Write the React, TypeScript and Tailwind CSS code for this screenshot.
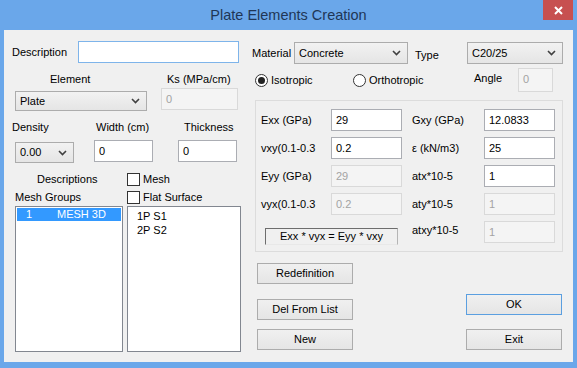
import React from 'react';

const FONT = { fontFamily: '"Liberation Sans", Arial, sans-serif' };

function TextBox({ w, h = 22, value, disabled, focused }: { w: number; h?: number; value?: string; disabled?: boolean; focused?: boolean }) {
  const border = focused ? 'border-[#7eb4ea]' : disabled ? 'border-[#d9d9d9]' : 'border-[#abadb3]';
  return (
    <div
      className={`border ${border} ${disabled ? 'bg-[#f4f4f4] text-[#a3a3a3]' : 'bg-white text-black'} pl-[4px] pt-[3px] text-[11px] leading-[14px] shrink-0`}
      style={{ width: w, height: h }}
    >
      {value}
    </div>
  );
}

function Combo({ w, h = 21, value }: { w: number; h?: number; value: string }) {
  return (
    <div
      className="flex items-center justify-between border border-[#acacac] bg-gradient-to-b from-[#f2f2f2] to-[#e5e5e5] pl-[4px] pr-[6px] text-[11px] text-black shrink-0"
      style={{ width: w, height: h }}
    >
      <span>{value}</span>
      <svg width="9" height="6" viewBox="0 0 9 6">
        <path d="M1 1 L4.5 4.5 L8 1" fill="none" stroke="#404040" strokeWidth="1.6" />
      </svg>
    </div>
  );
}

function Check({ label }: { label: string }) {
  return (
    <div className="flex items-center">
      <div className="w-[13px] h-[13px] border border-[#333] bg-white shrink-0" />
      <span className="ml-[3px]">{label}</span>
    </div>
  );
}

function Radio({ label, checked }: { label: string; checked?: boolean }) {
  return (
    <div className="flex items-center">
      <div className="w-[13px] h-[13px] rounded-full border border-[#333] bg-white flex items-center justify-center shrink-0">
        {checked && <div className="w-[7px] h-[7px] rounded-full bg-[#222]" />}
      </div>
      <span className="ml-[3px]">{label}</span>
    </div>
  );
}

function Btn({ label, isDefault }: { label: string; isDefault?: boolean }) {
  return (
    <div
      className={`w-[96px] h-[21px] flex items-center justify-center border ${
        isDefault ? 'border-[#5b9fe0]' : 'border-[#acacac]'
      } bg-gradient-to-b from-[#f0f0f0] to-[#e5e5e5] text-[11px] text-black`}
    >
      {label}
    </div>
  );
}

function FieldRow({ label, value, disabled }: { label: string; value: string; disabled?: boolean }) {
  return (
    <div className="flex items-center h-[22px]">
      <span className="w-[70px] shrink-0">{label}</span>
      <TextBox w={71} value={value} disabled={disabled} />
    </div>
  );
}

export default function App() {
  return (
    <div className="w-[577px] h-[368px] bg-[#6aa7ea] flex flex-col text-[11px] text-black overflow-hidden" style={FONT}>
      {/* Title bar */}
      <div className="relative h-[30px] flex items-center justify-center shrink-0">
        <span className="text-[14.5px] text-[#1f3656] mt-[2px]">Plate Elements Creation</span>
        <div className="absolute right-[4px] top-0 w-[30px] h-[20px] bg-[#c75050] flex items-center justify-center">
          <svg width="9" height="9" viewBox="0 0 9 9">
            <path d="M1 1 L8 8 M8 1 L1 8" stroke="#fff" strokeWidth="2" />
          </svg>
        </div>
      </div>

      {/* Client */}
      <div className="mx-[4px] h-[332px] bg-[#f0f0f0] flex">
        {/* Left column */}
        <div className="w-[241px] shrink-0 pl-[8px] flex flex-col">
          <div className="mt-[11px] flex items-center h-[22px]">
            <span className="w-[66px] shrink-0">Description</span>
            <TextBox w={161} focused />
          </div>

          <div className="mt-[9px] flex items-center h-[14px]">
            <span className="ml-[38px] w-[117px] shrink-0">Element</span>
            <span>Ks (MPa/cm)</span>
          </div>

          <div className="mt-[2px] flex items-start h-[23px]">
            <div className="ml-[3px] mt-[3px]">
              <Combo w={132} h={20} value="Plate" />
            </div>
            <div className="ml-[14px]">
              <TextBox w={77} value="0" disabled />
            </div>
          </div>

          <div className="mt-[9px] flex items-center h-[14px]">
            <span className="w-[84px] shrink-0">Density</span>
            <span className="w-[88px] shrink-0">Width (cm)</span>
            <span>Thickness</span>
          </div>

          <div className="mt-[6px] flex items-start h-[23px]">
            <div className="ml-[3px] mt-[2px]">
              <Combo w={59} value="0.00" />
            </div>
            <div className="ml-[20px]">
              <TextBox w={59} value="0" />
            </div>
            <div className="ml-[25px]">
              <TextBox w={59} value="0" />
            </div>
          </div>

          <div className="mt-[9px] flex items-center h-[14px]">
            <span className="ml-[25px] w-[90px] shrink-0">Descriptions</span>
            <Check label="Mesh" />
          </div>

          <div className="mt-[4px] flex items-center h-[14px]">
            <span className="ml-[3px] w-[112px] shrink-0">Mesh Groups</span>
            <Check label="Flat Surface" />
          </div>

          <div className="mt-[2px] flex h-[146px]">
            <div className="ml-[3px] w-[108px] border border-[#828790] bg-white p-[1px]">
              <div className="flex h-[13px] items-center bg-[#3399ff] text-white">
                <span className="ml-[9px] w-[31px]">1</span>
                <span>MESH 3D</span>
              </div>
            </div>
            <div className="ml-[4px] w-[114px] border border-[#828790] bg-white pt-[2px] pl-[9px] leading-[14px]">
              <div>1P S1</div>
              <div>2P S2</div>
            </div>
          </div>
        </div>

        {/* Right column */}
        <div className="flex-1 pl-[7px] flex flex-col">
          <div className="mt-[12px] flex items-center h-[22px]">
            <span className="w-[42px] shrink-0">Material</span>
            <Combo w={114} h={22} value="Concrete" />
            <span className="ml-[7px] w-[52px] shrink-0 mt-[4px]">Type</span>
            <Combo w={96} h={22} value="C20/25" />
          </div>

          <div className="mt-[4px] flex items-center h-[24px]">
            <div className="ml-[3px] w-[98px] shrink-0">
              <Radio label="Isotropic" checked />
            </div>
            <div className="w-[121px] shrink-0">
              <Radio label="Orthotropic" />
            </div>
            <span className="w-[44px] shrink-0 -mt-[4px]">Angle</span>
            <TextBox w={35} h={24} value="0" disabled />
          </div>

          <div className="mt-[8px] ml-[3px] w-[308px] h-[152px] border border-[#dcdcdc] pt-[8px] pl-[5px] flex">
            <div className="flex flex-col gap-[6px]">
              <FieldRow label="Exx (GPa)" value="29" />
              <FieldRow label="vxy(0.1-0.3" value="0.2" />
              <FieldRow label="Eyy (GPa)" value="29" disabled />
              <FieldRow label="vyx(0.1-0.3" value="0.2" disabled />
              <div className="h-[22px] flex items-start">
                <div className="ml-[4px] mt-[7px] w-[133px] h-[17px] border-t border-l border-t-[#6d6d6d] border-l-[#6d6d6d] border-r border-b border-r-[#b5b5b5] border-b-[#e8e8e8] flex items-center justify-center">
                  Exx * vyx = Eyy * vxy
                </div>
              </div>
            </div>
            <div className="ml-[10px] flex flex-col gap-[6px]">
              <div className="flex items-center h-[22px]">
                <span className="w-[72px] shrink-0">Gxy (GPa)</span>
                <TextBox w={71} value="12.0833" />
              </div>
              <div className="flex items-center h-[22px]">
                <span className="w-[72px] shrink-0">ε (kN/m3)</span>
                <TextBox w={71} value="25" />
              </div>
              <div className="flex items-center h-[22px]">
                <span className="w-[72px] shrink-0">atx*10-5</span>
                <TextBox w={71} value="1" />
              </div>
              <div className="flex items-center h-[22px]">
                <span className="w-[72px] shrink-0">aty*10-5</span>
                <TextBox w={71} value="1" disabled />
              </div>
              <div className="flex items-center h-[22px]">
                <span className="w-[72px] shrink-0 -mt-[4px]">atxy*10-5</span>
                <TextBox w={71} value="1" disabled />
              </div>
            </div>
          </div>

          <div className="mt-[11px] ml-[5px] flex">
            <div className="flex flex-col">
              <Btn label="Redefinition" />
              <div className="mt-[15px]">
                <Btn label="Del From List" />
              </div>
              <div className="mt-[9px]">
                <Btn label="New" />
              </div>
            </div>
            <div className="ml-[113px] flex flex-col">
              <div className="mt-[31px]">
                <Btn label="OK" isDefault />
              </div>
              <div className="mt-[14px]">
                <Btn label="Exit" />
              </div>
            </div>
          </div>
        </div>
      </div>
    </div>
  );
}
